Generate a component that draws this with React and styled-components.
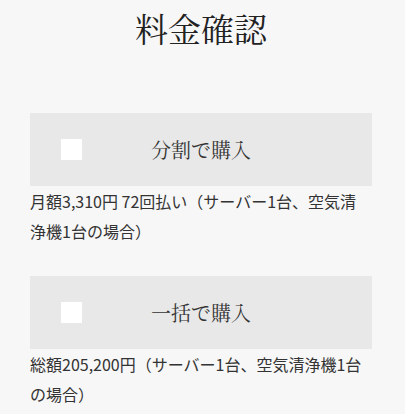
import React from "react";
import styled, { createGlobalStyle } from "styled-components";

const Global = createGlobalStyle`
  html, body { margin: 0; padding: 0; background: #f7f7f7; }
  body { font-family: "Noto Sans CJK JP", sans-serif; }
`;

const Page = styled.div`
  padding: 0 33px 0 30px;
  display: flex;
  flex-direction: column;
`;

const Title = styled.h1`
  margin: 0;
  padding-top: 6px;
  height: 107px;
  text-align: center;
  font-family: "Noto Serif CJK JP", "IPAMincho", "IPAexMincho", "Liberation Serif", "Noto Sans CJK JP", serif;
  font-weight: 400;
  font-size: 33px;
  line-height: 44px;
  color: #222;
`;

const Option = styled.div`
  display: flex;
  flex-direction: column;
  margin-bottom: ${(p) => p.$gap}px;
`;

const Button = styled.label`
  position: relative;
  display: flex;
  align-items: center;
  justify-content: center;
  height: 73px;
  background: #e8e8e8;
  font-family: "Noto Serif CJK JP", "IPAMincho", "IPAexMincho", "Liberation Serif", "Noto Sans CJK JP", serif;
  font-size: 20px;
  color: #333;
`;

const Box = styled.span`
  position: absolute;
  left: 31px;
  top: 26px;
  width: 21px;
  height: 21px;
  background: #fff;
`;

const Desc = styled.p`
  margin: 0;
  font-size: 16px;
  line-height: 30px;
  color: #333;
`;

export default function App() {
  return (
    <>
      <Global />
      <Page>
        <Title>料金確認</Title>
        <Option $gap={30}>
          <Button>
            <Box />
            分割で購入
          </Button>
          <Desc>月額3,310円 72回払い（サーバー1台、空気清浄機1台の場合）</Desc>
        </Option>
        <Option $gap={0}>
          <Button>
            <Box />
            一括で購入
          </Button>
          <Desc>総額205,200円（サーバー1台、空気清浄機1台の場合）</Desc>
        </Option>
      </Page>
    </>
  );
}
